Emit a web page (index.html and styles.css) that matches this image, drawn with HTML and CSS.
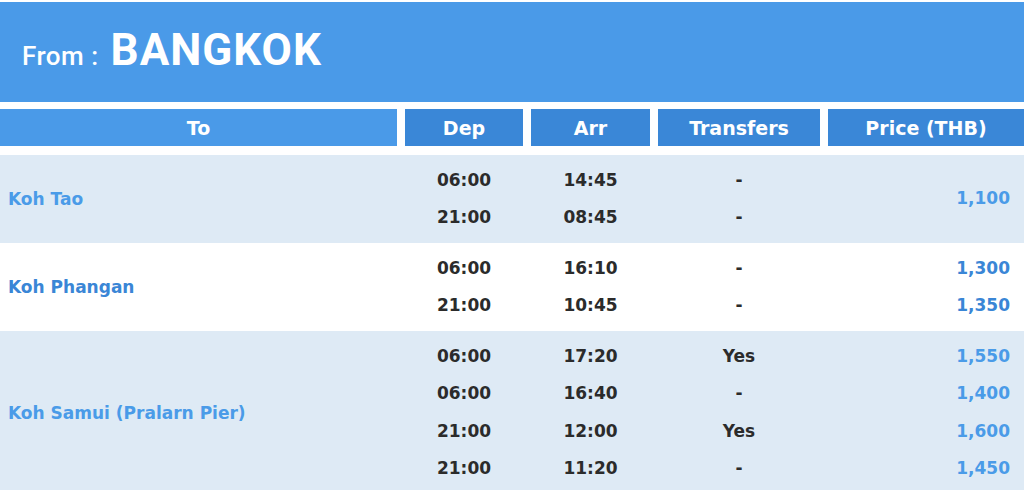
FILE: index.html
```html
<!DOCTYPE html>
<html>
<head>
<meta charset="utf-8">
<link rel="stylesheet" href="styles.css">
</head>
<body>
<div class="page">
  <div class="title">
    <span class="from">From :</span>
    <span class="city">BANGKOK</span>
  </div>
  <div class="thead">
    <div class="th th-to">To</div>
    <div class="th">Dep</div>
    <div class="th">Arr</div>
    <div class="th">Transfers</div>
    <div class="th">Price (THB)</div>
  </div>
  <div class="row alt">
    <div class="dest light">Koh Tao</div>
    <div class="col"><div class="ln">06:00</div><div class="ln">21:00</div></div>
    <div class="col"><div class="ln">14:45</div><div class="ln">08:45</div></div>
    <div class="col"><div class="ln">-</div><div class="ln">-</div></div>
    <div class="col price light center-v"><div class="ln">1,100</div></div>
  </div>
  <div class="row">
    <div class="dest dark">Koh Phangan</div>
    <div class="col"><div class="ln">06:00</div><div class="ln">21:00</div></div>
    <div class="col"><div class="ln">16:10</div><div class="ln">10:45</div></div>
    <div class="col"><div class="ln">-</div><div class="ln">-</div></div>
    <div class="col price dark"><div class="ln">1,300</div><div class="ln">1,350</div></div>
  </div>
  <div class="row alt">
    <div class="dest light">Koh Samui (Pralarn Pier)</div>
    <div class="col"><div class="ln">06:00</div><div class="ln">06:00</div><div class="ln">21:00</div><div class="ln">21:00</div></div>
    <div class="col"><div class="ln">17:20</div><div class="ln">16:40</div><div class="ln">12:00</div><div class="ln">11:20</div></div>
    <div class="col"><div class="ln">Yes</div><div class="ln">-</div><div class="ln">Yes</div><div class="ln">-</div></div>
    <div class="col price light"><div class="ln">1,550</div><div class="ln">1,400</div><div class="ln">1,600</div><div class="ln">1,450</div></div>
  </div>
</div>
</body>
</html>
```

FILE: styles.css
```css
html, body {
  margin: 0;
  padding: 0;
  background: #ffffff;
}

.page {
  padding-top: 2px;
  font-family: "DejaVu Sans", Verdana, sans-serif;
  font-weight: bold;
}

.title {
  height: 100px;
  background: #4a9ae8;
  color: #ffffff;
  display: flex;
  align-items: baseline;
  padding-left: 22px;
  box-sizing: border-box;
  padding-top: 22px;
  font-family: Roboto, sans-serif;
}

.from {
  font-size: 26px;
  font-weight: 500;
  letter-spacing: 0.5px;
  margin-right: 12px;
}

.city {
  font-size: 44px;
  font-weight: 700;
  letter-spacing: 1px;
}

.thead {
  display: grid;
  grid-template-columns: 397px 118px 119px 162px 1fr;
  column-gap: 8px;
  margin-top: 7px;
  margin-bottom: 9px;
}

.th {
  height: 37px;
  background: #3a87d7;
  color: #ffffff;
  font-size: 19px;
  display: flex;
  align-items: center;
  justify-content: center;
}

.th-to {
  background: #4a9ae8;
}

.row {
  display: grid;
  grid-template-columns: 397px 118px 119px 162px 1fr;
  column-gap: 8px;
  padding: 6.5px 0;
  background: #ffffff;
  color: #2b2b2b;
  font-size: 17px;
}

.row.alt {
  background: #deeaf5;
}

.dest {
  display: flex;
  align-items: center;
  padding-left: 8px;
}

.light {
  color: #4a9be8;
}

.dark {
  color: #3a86d6;
}

.col {
  display: flex;
  flex-direction: column;
  text-align: center;
}

.ln {
  line-height: 37.5px;
  height: 37.5px;
}

.price {
  text-align: right;
  padding-right: 14px;
}

.center-v {
  justify-content: center;
}
```
